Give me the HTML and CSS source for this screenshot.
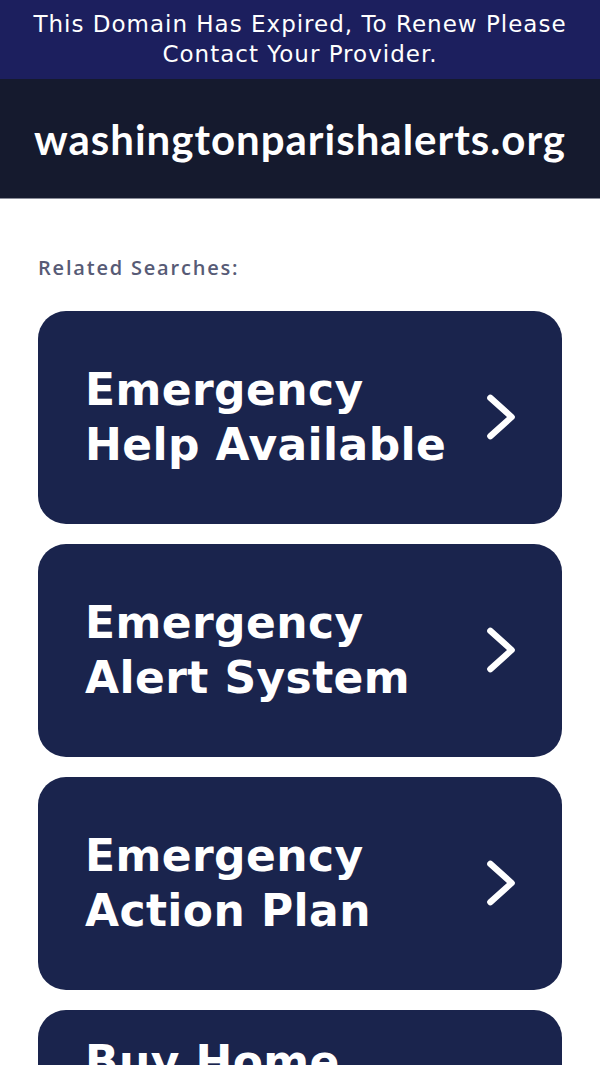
FILE: index.html
```html
<!DOCTYPE html>
<html>
<head>
<meta charset="utf-8">
<link rel="stylesheet" href="styles.css">
</head>
<body>
<div class="notice">This Domain Has Expired, To Renew Please Contact Your Provider.</div>
<header class="site"><h1>washingtonparishalerts.org</h1></header>
<main class="content">
  <p class="label">Related Searches:</p>
  <div class="list">
    <a class="card" href="#"><span class="txt">Emergency<br>Help Available</span><svg class="chev" viewBox="0 0 32 48"><path d="M6 6 L26 24 L6 42" fill="none" stroke="#fff" stroke-width="6" stroke-linecap="round" stroke-linejoin="round"/></svg></a>
    <a class="card" href="#"><span class="txt">Emergency<br>Alert System</span><svg class="chev" viewBox="0 0 32 48"><path d="M6 6 L26 24 L6 42" fill="none" stroke="#fff" stroke-width="6" stroke-linecap="round" stroke-linejoin="round"/></svg></a>
    <a class="card" href="#"><span class="txt">Emergency<br>Action Plan</span><svg class="chev" viewBox="0 0 32 48"><path d="M6 6 L26 24 L6 42" fill="none" stroke="#fff" stroke-width="6" stroke-linecap="round" stroke-linejoin="round"/></svg></a>
    <a class="card" href="#"><span class="txt">Buy Home<br>Security<br>Systems</span><svg class="chev" viewBox="0 0 32 48"><path d="M6 6 L26 24 L6 42" fill="none" stroke="#fff" stroke-width="6" stroke-linecap="round" stroke-linejoin="round"/></svg></a>
  </div>
</main>
</body>
</html>
```
FILE: styles.css
```css
html, body { margin: 0; padding: 0; background: #fff; }
body { font-family: "Open Sans", "DejaVu Sans", sans-serif; }
.notice {
  background: #1c1f5e;
  color: #fff;
  text-align: center;
  font-family: "DejaVu Sans", sans-serif;
  font-size: 23px;
  line-height: 30px;
  letter-spacing: 1px;
  padding: 9px 20px 10px;
  height: 60px;
}
.site {
  background: #151a2e;
  height: 119px;
  display: flex;
  align-items: center;
  justify-content: center;
  border-bottom: 1px solid #8a8d99;
}
.site h1 {
  margin: 0;
  color: #fff;
  font-family: "Lato", "Open Sans", sans-serif;
  font-weight: 700;
  font-size: 42px;
  letter-spacing: 1px;
}
.content { padding: 0 38px; }
.label {
  margin: 0;
  padding-top: 54px;
  font-size: 20px;
  line-height: 30px;
  color: #575b76;
  font-weight: 600;
  letter-spacing: 1.8px;
}
.list {
  margin-top: 28px;
  display: flex;
  flex-direction: column;
  gap: 20.5px;
}
.card {
  display: flex;
  align-items: center;
  justify-content: space-between;
  height: 212.5px;
  flex: none;
  box-sizing: border-box;
  padding: 0 44px 0 47px;
  background: #1a244d;
  border-radius: 28px;
  text-decoration: none;
  color: #fff;
}
.txt {
  font-family: "DejaVu Sans", sans-serif;
  font-weight: 700;
  font-size: 44px;
  line-height: 55px;
  letter-spacing: 0.4px;
}
.chev { width: 34px; height: 52px; flex: none; }
```
